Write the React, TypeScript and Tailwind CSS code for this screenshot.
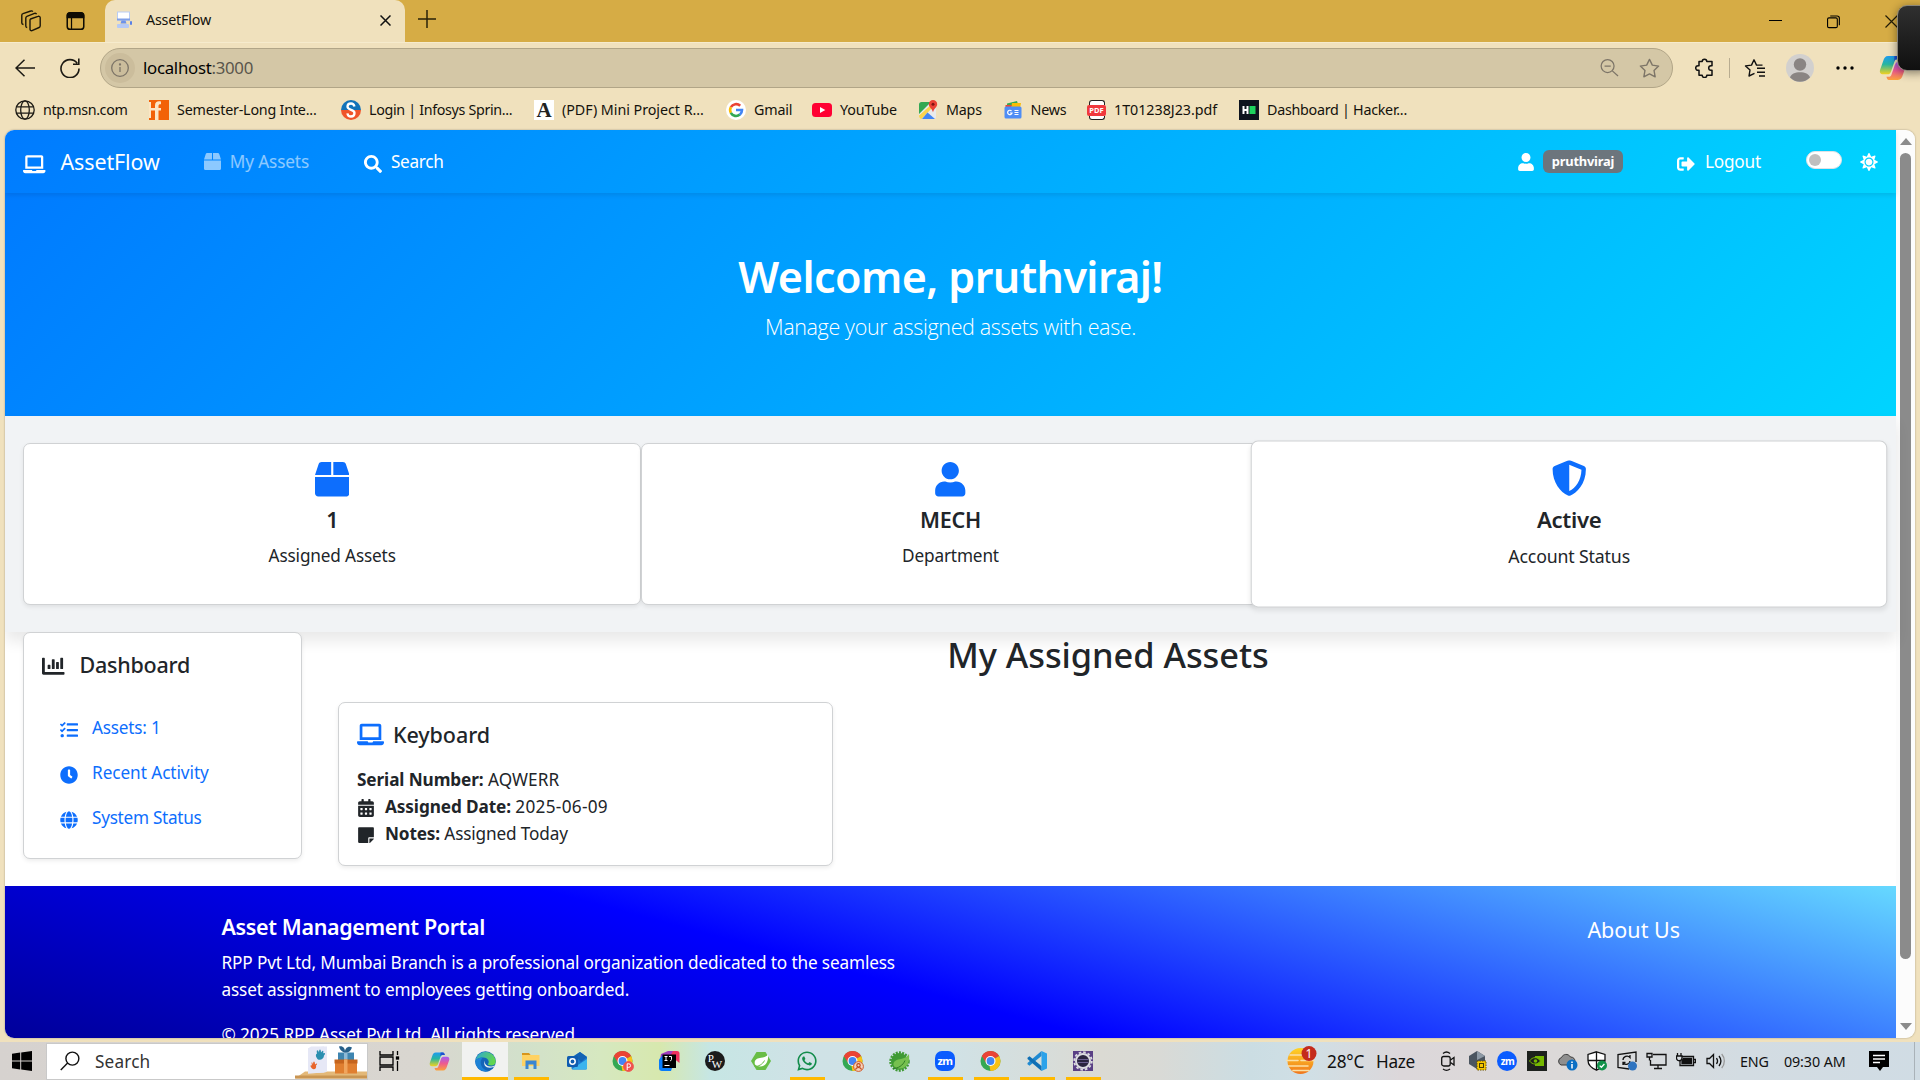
import type { ReactNode } from "react";
import {
  FaBox,
  FaCalendarAlt,
  FaChartBar,
  FaClock,
  FaGlobe,
  FaLaptop,
  FaSearch,
  FaShieldAlt,
  FaSignOutAlt,
  FaStickyNote,
  FaSun,
  FaTasks,
  FaUser,
  FaWhatsapp,
} from "react-icons/fa";

/* ---------- Browser chrome icons ---------- */

const WorkspacesIcon = () => (
  <svg width="22" height="22" viewBox="0 0 22 22" fill="none" stroke="#1b1608" strokeWidth="1.4" strokeLinejoin="round">
    <path d="M10.500 9 18 6.300a1.600 1.600 0 0 1 2.200 1.500v8c0 .8-.4 1.400-1.100 1.700L12 20.700c-1 .3-2-.4-2-1.400v-9c0-.6.1-1 .5-1.300Z" />
    <path d="M7.200 17.500c-.9-.1-1.400-.8-1.400-1.600V8c0-.8.400-1.400 1.100-1.700l7.600-2.900c.8-.3 1.700.1 2 .9" />
    <path d="M3.500 14.500c-.9-.1-1.700-.8-1.700-1.600V5.300c0-.8.500-1.500 1.200-1.700L10.800 1c.8-.3 1.600 0 2 .6" />
  </svg>
);

const TabActionsIcon = () => (
  <svg width="19" height="20" viewBox="0 0 20 20" fill="none" stroke="#0f0c04" strokeWidth="1.600">
    <rect x="1.300" y="1.300" width="17.400" height="17.400" rx="3" />
    <path d="M1.500 4.200A3 3 0 0 1 4.300 1.500h11.400a3 3 0 0 1 2.800 2.700v2H1.500Z" fill="#0f0c04" />
    <path d="M5.800 6v12.500" strokeWidth="1.300" />
  </svg>
);

const AssetFavicon = () => (
  <svg width="16" height="18" viewBox="0 0 16 18">
    <rect x="1.500" y="1" width="12" height="8" fill="#fff" stroke="#b9cdf5" />
    <path d="M1 7.500h13v2H1z" fill="#7f9fe8" />
    <path d="M5.500 9.500h4l1 3h-6z" fill="#6d92ea" />
    <rect x="1" y="13" width="12" height="4" rx="1" fill="#b5c9f6" />
    <rect x="14" y="10" width="2" height="4" rx="1" fill="#5a80e6" />
  </svg>
);

const StarPath = "M10 1.300l2.700 5.500 6 .9-4.400 4.200 1.100 6L10 15.100l-5.400 2.800 1.100-6L1.300 7.700l6-.9z";

const CopilotIcon = ({ size = 20 }: { size?: number }) => (
  <svg width={size} height={size} viewBox="0 0 20 20" className="shrink-0">
    <defs>
      <linearGradient id="cpa" x1="0" y1="0" x2="0" y2="1">
        <stop offset="0" stopColor="#1f9bf0" />
        <stop offset=".45" stopColor="#27b6a0" />
        <stop offset="1" stopColor="#f4d21f" />
      </linearGradient>
      <linearGradient id="cpb" x1="0" y1="0" x2="0" y2="1">
        <stop offset="0" stopColor="#a45cf2" />
        <stop offset=".5" stopColor="#ee5a8e" />
        <stop offset="1" stopColor="#fba13b" />
      </linearGradient>
    </defs>
    <path d="M13 1.500H6.500C4.500 1.500 3.600 3 3 5L.8 11.200C.2 13 1 14.500 3 14.500h3c1.500 0 2.300-1 2.800-2.600L11 5.500c.4-1.300 1-1.800 2.300-1.800h1.400C14.300 2.300 14 1.500 13 1.500Z" fill="url(#cpa)" />
    <path d="M11 1.500h2.500c1 .1 1.300.9 1.700 2.300h-2.300c-1.200 0-1.700.6-2.100 1.700z" fill="#1e4fd0" />
    <path d="M7 18.500h6.500c2 0 2.900-1.500 3.500-3.500l2.200-6.200c.6-1.800-.2-3.300-2.200-3.300h-3c-1.500 0-2.300 1-2.800 2.600L9 14.500c-.4 1.300-1 1.800-2.300 1.800H5.300c.4 1.400.7 2.200 1.700 2.200Z" fill="url(#cpb)" />
  </svg>
);

/* ---------- Bookmark icons ---------- */

const WireGlobe = () => (
  <svg width="20" height="20" viewBox="0 0 20 20" fill="none" stroke="#1c1a14" strokeWidth="1.300">
    <circle cx="10" cy="10" r="9.200" />
    <ellipse cx="10" cy="10" rx="4.300" ry="9.200" />
    <path d="M1.500 6.800h17M1.500 13.200h17" />
  </svg>
);

const FossIcon = () => (
  <svg width="20" height="20" viewBox="0 0 20 20">
    <rect width="20" height="20" fill="#f26207" />
    <path d="M0 2h2v16H0zM12 1.500c-3.500-.8-6 .4-6 4V8H2v2.500h4V20h3.500v-9.500H12V8H9.500V6c0-1.500.9-2 2.500-1.800z" fill="#fbe6c4" />
  </svg>
);

const SpringboardIcon = () => (
  <svg width="20" height="20" viewBox="0 0 20 20">
    <path d="M0 10a10 10 0 0 1 20 0z" fill="#1273b9" />
    <path d="M0 10a10 10 0 0 0 20 0z" fill="#f0542a" />
    <path d="M13.500 6.500C13 4.500 11.700 3.500 10 3.500c-2 0-3.500 1.200-3.500 3.100 0 4.200 7 2.400 7 6.300 0 2.200-1.500 3.600-3.500 3.600s-3.300-1.200-3.600-3.200" fill="none" stroke="#fff" strokeWidth="2.300" />
  </svg>
);

const AcademiaIcon = () => (
  <div className="flex size-5 items-center justify-center bg-white font-['Liberation_Serif',serif] text-[21px] leading-5 font-bold text-[#222]">A</div>
);

const GoogleIcon = () => (
  <svg width="20" height="20" viewBox="0 0 20 20">
    <circle cx="10" cy="10" r="10" fill="#fff" />
    <g fill="none" strokeWidth="2.600">
      <path d="M4.900 7.200A6 6 0 0 1 14.200 5.700" stroke="#ea4335" />
      <path d="M4.900 12.900a6 6 0 0 1 0-5.800" stroke="#fbbc05" />
      <path d="M13.900 14.600a6 6 0 0 1-9.100-1.800" stroke="#34a853" />
      <path d="M10 10h6c0 2-.7 3.500-2.200 4.700" stroke="#4285f4" />
    </g>
  </svg>
);

const YoutubeIcon = () => (
  <svg width="20" height="20" viewBox="0 0 20 20">
    <rect y="3" width="20" height="14" rx="3.500" fill="#ff0033" />
    <path d="M8 7l5.300 3L8 13z" fill="#fff" />
  </svg>
);

const MapsIcon = () => (
  <svg width="20" height="20" viewBox="0 0 20 20">
    <rect x="1" y="2" width="17" height="17" rx="2.500" fill="#e9eaec" />
    <path d="M3.500 2H13L1 14V4.500A2.500 2.500 0 0 1 3.500 2Z" fill="#34a853" />
    <path d="M1 15.500 14 4l2 2L3.500 19C2 19 1 17.500 1 15.500Z" fill="#fbd34d" />
    <path d="M9.500 12.500 17 19H4z" fill="#4285f4" />
    <path d="M15 0a4.200 4.200 0 0 1 4.200 4.200c0 3-3.300 4-4.200 8-.9-4-4.200-5-4.200-8A4.200 4.200 0 0 1 15 0Z" fill="#ea4335" />
    <circle cx="15" cy="4.300" r="1.500" fill="#811411" />
  </svg>
);

const NewsIcon = () => (
  <svg width="20" height="20" viewBox="0 0 20 20">
    <path d="M4 3.500 14 1l1.500 5H4z" fill="#34a853" />
    <path d="M9 3h9l-1 5H8z" fill="#fbbc05" />
    <path d="M2.500 5h6v3h-6z" fill="#ea4335" />
    <rect x="1.500" y="6.500" width="17" height="12" rx="1.500" fill="#4e8df5" />
    <path d="M8.500 11A2.200 2.200 0 1 0 9 13H7M11.500 10.500h4M11.500 12.500h4M11.500 14.500h4" fill="none" stroke="#fff" strokeWidth="1.200" />
  </svg>
);

const PdfIcon = () => (
  <div className="flex h-5 w-[19px] flex-col items-center justify-center">
    <div className="h-[5px] w-[16px] rounded-t-[3px] border border-b-0 border-[#222] bg-white" />
    <div className="w-[19px] rounded-[2px] bg-[#f0383d] text-center text-[7.500px] leading-[11px] font-bold text-white">PDF</div>
    <div className="h-[4px] w-[16px] rounded-b-[3px] border border-t-0 border-[#222] bg-white" />
  </div>
);

const HackerRankIcon = () => (
  <svg width="20" height="20" viewBox="0 0 20 20">
    <rect width="20" height="20" fill="#0e141e" />
    <path d="M3.500 6h2v3h2V6h2v8h-2v-3h-2v3h-2z" fill="#fff" />
    <rect x="10.500" y="6" width="6" height="8" fill="#1fd35e" />
  </svg>
);

const bookmarks: { label: string; icon: ReactNode; box: string; text: string }[] = [
  { label: "ntp.msn.com", icon: <WireGlobe />, box: "w-[134px]", text: "tracking-[-0.36px]" },
  { label: "Semester-Long Inte...", icon: <FossIcon />, box: "w-[192px]", text: "tracking-[-0.2px]" },
  { label: "Login | Infosys Sprin...", icon: <SpringboardIcon />, box: "w-[193px]", text: "tracking-[-0.33px]" },
  { label: "(PDF) Mini Project R...", icon: <AcademiaIcon />, box: "w-[192px]", text: "tracking-[-0.04px]" },
  { label: "Gmail", icon: <GoogleIcon />, box: "w-[86px]", text: "tracking-[-0.2px]" },
  { label: "YouTube", icon: <YoutubeIcon />, box: "w-[106px]", text: "tracking-[-0.14px]" },
  { label: "Maps", icon: <MapsIcon />, box: "w-[84.500px]", text: "tracking-[-0.2px]" },
  { label: "News", icon: <NewsIcon />, box: "w-[84.500px]", text: "tracking-[-0.2px]" },
  { label: "1T01238J23.pdf", icon: <PdfIcon />, box: "w-[152px]", text: "tracking-[-0.03px]" },
  { label: "Dashboard | Hacker...", icon: <HackerRankIcon />, box: "w-[180px]", text: "tracking-[-0.270px]" },
];

/* ---------- Browser chrome ---------- */

function TitleBar() {
  return (
    <div className="flex h-[42px] bg-[#d6ac45]">
      <div className="flex w-[105px] items-center pb-px pl-[20px]">
        <WorkspacesIcon />
        <div className="w-6" />
        <TabActionsIcon />
      </div>
      <div className="flex h-[42px] w-[300px] items-center rounded-t-[10px] bg-[#f0e1bd] pb-[2px] pl-[11px] text-[14.300px] tracking-[-0.2px]">
        <AssetFavicon />
        <span className="ml-[14px]">AssetFlow</span>
        <svg className="mr-[14px] ml-auto" width="11" height="11" viewBox="0 0 11 11" stroke="#111" strokeWidth="1.500">
          <path d="M.5.5l10 10M10.500.5l-10 10" />
        </svg>
      </div>
      <svg className="mt-[10px] ml-[13px]" width="18" height="18" viewBox="0 0 18 18" stroke="#2a2209" strokeWidth="1.500">
        <path d="M9 0v18M0 9h18" />
      </svg>
      <div className="ml-auto flex w-[151px] items-start gap-[45px] pt-[15px]">
        <svg width="13" height="13" viewBox="0 0 13 13" stroke="#000">
          <path d="M0 5.500h13" />
        </svg>
        <svg width="13" height="14" viewBox="0 0 14 14" fill="none" stroke="#000" strokeWidth="1.200">
          <rect x=".6" y="2.600" width="10.500" height="10.500" rx="1.500" />
          <path d="M3.500.6h7.400a2.400 2.400 0 0 1 2.400 2.400v7.500" />
        </svg>
        <svg width="13" height="13" viewBox="0 0 13 13" stroke="#221b06" strokeWidth="1.200">
          <path d="M.5.500l12 12M12.500.500l-12 12" />
        </svg>
      </div>
    </div>
  );
}

function AddressRow() {
  return (
    <div className="flex h-[51px] items-center border-t border-[#f6ebcd] pl-[15px]">
      <svg width="20" height="18" viewBox="0 0 20 18" fill="none" stroke="#1c1a14" strokeWidth="1.500">
        <path d="M20 9H1M9.500.7 1 9l8.500 8.300" />
      </svg>
      <svg className="ml-[25px]" width="20" height="20" viewBox="0 0 20 20" fill="none" stroke="#1c1a14" strokeWidth="1.600">
        <path d="M17.200 5.200A9 9 0 1 0 19 10.500M18.800.5v5.800H13" />
      </svg>
      <div className="ml-[20px] flex h-10 w-[1573px] items-center rounded-full border border-[#b1a587] bg-[#d4c7a6] pr-[12px] pl-[4px] text-[16.800px]">
        <div className="flex size-[30px] items-center justify-center rounded-full bg-[#cbbd9c]">
          <svg width="18" height="18" viewBox="0 0 18 18" fill="none" stroke="#7c7467" strokeWidth="1.300">
            <circle cx="9" cy="9" r="8.300" />
            <path d="M9 8v5" />
            <circle cx="9" cy="5.500" r=".5" />
          </svg>
        </div>
        <span className="ml-[8px] tracking-[-0.270px] text-black">
          localhost<span className="text-[#5a564c]">:3000</span>
        </span>
        <svg className="ml-auto" width="19" height="20" viewBox="0 0 20 20" fill="none" stroke="#7c7467" strokeWidth="1.300">
          <circle cx="8" cy="8" r="6.800" />
          <path d="M13 13l6 5.500M4.800 8h6.500" />
        </svg>
        <svg className="ml-[20px]" width="21" height="21" viewBox="0 0 20 20" fill="none" stroke="#7c7467" strokeWidth="1.300" strokeLinejoin="round">
          <path d={StarPath} />
        </svg>
      </div>
      <svg className="ml-[22px]" width="19" height="20" viewBox="0 0 19 20" fill="none" stroke="#111" strokeWidth="1.500" strokeLinejoin="round">
        <path d="M4 3.500h3.200a2.300 2.300 0 0 1 4.600 0H17v4.200h-1a2.300 2.300 0 0 0 0 4.600h1v5h-5.200a2.300 2.300 0 0 1-4.600 0H4v-5H3a2.300 2.300 0 0 1 0-4.600h1z" />
      </svg>
      <div className="ml-[15px] h-5 w-px bg-[#b8ac90]" />
      <svg className="ml-[14px]" width="22" height="20" viewBox="0 0 22 20" fill="none" stroke="#111" strokeWidth="1.400" strokeLinejoin="round">
        <path d="M10.500 15.400 5 18l1-6L1.500 7.900l6-.8L10 1.800l2.500 5.300h6M13 10.200h8M13 14.200h8M15 18h6" />
      </svg>
      <svg className="ml-[20px]" width="28" height="28" viewBox="0 0 28 28">
        <circle cx="14" cy="14" r="14" fill="#d2d0ce" />
        <circle cx="14" cy="10.500" r="6.200" fill="#8a8583" />
        <path d="M4 23.500C5 20 9 18.300 14 18.300s9 1.700 10 5.200a14 14 0 0 1-20 0Z" fill="#8a8583" />
      </svg>
      <svg className="ml-[22px]" width="18" height="4" viewBox="0 0 18 4">
        <circle cx="2" cy="2" r="1.700" />
        <circle cx="9" cy="2" r="1.700" />
        <circle cx="16" cy="2" r="1.700" />
      </svg>
      <div className="ml-[25px]">
        <CopilotIcon size={28} />
      </div>
    </div>
  );
}

function BookmarksBar() {
  return (
    <div className="flex h-[37px] items-center pl-[15px] text-[14.300px] leading-5 whitespace-nowrap">
      {bookmarks.map((b) => (
        <div key={b.label} className={`${b.box} flex shrink-0 items-center gap-[8px] pb-[3px]`}>
          {b.icon}
          <span className={b.text}>{b.label}</span>
        </div>
      ))}
    </div>
  );
}

/* ---------- Page ---------- */

function Navbar() {
  return (
    <nav className="relative flex h-[63px] shrink-0 items-center bg-[linear-gradient(135deg,#007bff,#00d4ff)] pr-[18px] pl-[18px] text-[17.200px] text-white shadow-[0_2px_5px_rgba(0,0,0,0.1)]">
      <FaLaptop className="mt-[5px] size-[22.500px]" />
      <span className="mt-[2px] ml-[15px] text-[21.500px] tracking-[-0.130px]">AssetFlow</span>
      <span className="ml-[44px] flex items-center text-white/55">
        <FaBox className="size-[17px]" />
        <span className="ml-[9px] tracking-[-0.130px]">My Assets</span>
      </span>
      <FaSearch className="mt-[4px] ml-[55px] size-[18px]" />
      <span className="ml-[9px] tracking-[-0.300px]">Search</span>
      <FaUser className="ml-auto size-[18px]" />
      <span className="ml-[8px] flex h-[23px] w-[80px] items-center justify-center rounded-[6px] bg-[#6c757d] pt-px text-[12.900px] font-bold tracking-[-0.220px]">pruthviraj</span>
      <FaSignOutAlt className="mt-[5px] ml-[54px] size-[18px]" />
      <span className="ml-[10px] tracking-[-0.2px]">Logout</span>
      <span className="mb-[4px] ml-[45px] flex h-[18px] w-[36px] items-center rounded-full border border-[#dee2e6] bg-white pl-[2px]">
        <span className="size-[12px] rounded-full bg-[#bfbfbf]" />
      </span>
      <FaSun className="ml-[18px] size-[18px]" />
    </nav>
  );
}

function StatCard({ icon, value, label, raised = false }: { icon: ReactNode; value: string; label: string; raised?: boolean }) {
  return (
    <div
      className={`flex h-[162px] flex-1 flex-col items-center rounded-[7px] border border-[#d0d2d4] bg-white pt-[18px] ${raised ? "relative scale-[1.03] shadow-[0_3px_5px_rgba(0,0,0,0.08)]" : "shadow-[0_2px_4px_rgba(0,0,0,0.075)]"}`}
    >
      <div className="text-[34.500px] text-[#0d6efd]">{icon}</div>
      <div className="mt-[9px] text-[21.500px] leading-[27px] font-semibold tracking-[-0.300px]">{value}</div>
      <div className="mt-[9px] leading-[27px]">{label}</div>
    </div>
  );
}

function SideLink({ icon, children }: { icon: ReactNode; children: ReactNode }) {
  return (
    <div className="flex h-[45px] items-start gap-[14px] text-[#0d6efd]">
      <span className="mt-[7px] text-[18px]">{icon}</span>
      <span className="leading-[27px]">{children}</span>
    </div>
  );
}

function Page() {
  return (
    <div className="flex min-w-0 flex-1 flex-col bg-white text-[17.200px] tracking-[-0.150px] text-[#212529]">
      <Navbar />
      <header className="flex h-[223px] shrink-0 flex-col items-center bg-[linear-gradient(135deg,#007bff,#00d4ff)] pt-[57px] text-white">
        <h1 className="text-[43px] leading-[54px] font-semibold tracking-[-0.570px]">Welcome, pruthviraj!</h1>
        <p className="mt-[6px] font-['Open_Sans',sans-serif] text-[21.500px] leading-[34px] font-[350] tracking-[-0.340px]">Manage your assigned assets with ease.</p>
      </header>
      <section className="relative flex h-[216px] shrink-0 bg-[#f1f3f5] px-[18px] pt-[27px] shadow-[0_9px_14px_rgba(0,0,0,0.09)]">
        <StatCard icon={<FaBox />} value="1" label="Assigned Assets" />
        <StatCard icon={<FaUser />} value="MECH" label="Department" />
        <StatCard icon={<FaShieldAlt />} value="Active" label="Account Status" raised />
      </section>
      <div className="relative flex h-[254px] shrink-0">
        <aside className="ml-[18px] h-[227px] w-[279px] rounded-[7px] border border-[#d0d2d4] bg-white pt-[18px] pl-[18px] shadow-[0_2px_4px_rgba(0,0,0,0.075)]">
          <div className="flex items-center">
            <FaChartBar className="mt-[4px] size-[22.500px]" />
            <h5 className="ml-[15px] text-[21.500px] leading-[27px] font-medium tracking-[-0.230px]">Dashboard</h5>
          </div>
          <div className="mt-[36px] ml-[18px]">
            <SideLink icon={<FaTasks />}>
              <span className="tracking-[-0.220px]">Assets: 1</span>
            </SideLink>
            <SideLink icon={<FaClock />}>
              <span className="tracking-[-0.060px]">Recent Activity</span>
            </SideLink>
            <SideLink icon={<FaGlobe />}>
              <span className="tracking-[-0.280px]">System Status</span>
            </SideLink>
          </div>
        </aside>
        <main className="ml-[18px] flex-1">
          <h2 className="pt-px text-center text-[34.400px] leading-[43px] font-medium tracking-[-0.050px]">My Assigned Assets</h2>
          <article className="mt-[26px] ml-[18px] h-[164px] w-[495px] rounded-[7px] border border-[#d0d2d4] bg-white pt-[18px] pl-[18px] shadow-[0_2px_4px_rgba(0,0,0,0.075)]">
            <div className="flex h-[27px] items-center">
              <FaLaptop className="size-[27px] text-[#0d6efd]" />
              <h5 className="mt-[2px] ml-[9px] text-[21.500px] font-medium tracking-[-0.080px]">Keyboard</h5>
            </div>
            <p className="mt-[18px] leading-[27px]">
              <b className="tracking-[-0.100px]">Serial Number:</b> <span className="tracking-[0.100px]">AQWERR</span>
            </p>
            <p className="flex leading-[27px]">
              <FaCalendarAlt className="mt-[6px] mr-[10px] size-[18px]" />
              <span>
                <b className="tracking-[-0.100px]">Assigned Date:</b> <span className="tracking-[0.300px]">2025-06-09</span>
              </span>
            </p>
            <p className="flex leading-[27px]">
              <FaStickyNote className="mt-[6px] mr-[10px] size-[18px]" />
              <span>
                <b>Notes:</b> Assigned Today
              </span>
            </p>
          </article>
        </main>
      </div>
      <footer className="flex h-[226px] shrink-0 justify-between bg-[linear-gradient(15deg,#000080,#0000ff_50%,#66d9ff)] pr-[216px] pl-[216.500px] text-white">
        <div className="pt-[27px]">
          <h5 className="text-[21.500px] leading-[27px] font-semibold tracking-[-0.370px]">Asset Management Portal</h5>
          <p className="mt-[9px] leading-[27px] tracking-[-0.145px]">
            RPP Pvt Ltd, Mumbai Branch is a professional organization dedicated to the seamless
            <br />
            asset assignment to employees getting onboarded.
          </p>
          <p className="mt-[18px] leading-[27px] tracking-[-0.090px]">© 2025 RPP Asset Pvt Ltd. All rights reserved.</p>
        </div>
        <div className="pt-[30px] text-[21.500px] leading-[27px] tracking-[0px]">About Us</div>
      </footer>
    </div>
  );
}

function Scrollbar() {
  return (
    <div className="flex w-[19px] flex-col items-center bg-[#fcfcfc] pt-[8px] pb-[8px]">
      <svg width="12" height="7" viewBox="0 0 12 7" fill="#8b8b8b">
        <path d="M6 0l6 7H0z" />
      </svg>
      <div className="mt-[8px] h-[806px] w-[11px] rounded-full bg-[#8b8b8b]" />
      <svg className="mt-auto" width="12" height="7" viewBox="0 0 12 7" fill="#8b8b8b">
        <path d="M6 7l6-7H0z" />
      </svg>
    </div>
  );
}

/* ---------- Taskbar ---------- */

const ChromeIcon = ({ badge }: { badge?: "p" | "user" }) => (
  <svg width="22" height="22" viewBox="0 0 22 22">
    <circle cx="10.500" cy="11" r="10" fill="#34a853" />
    <path d="M10.500 11 1.840 6A10 10 0 0 1 19.160 6z" fill="#ea4335" />
    <path d="M10.500 11 19.160 6A10 10 0 0 1 10.500 21z" fill="#fbc116" />
    <path d="M1.840 6h8.660v5L6.500 13.500z" fill="#ea4335" />
    <path d="M14.800 13.300 10.500 21l-1-5z" fill="#fbc116" />
    <circle cx="10.500" cy="11" r="5" fill="#fff" />
    <circle cx="10.500" cy="11" r="3.900" fill="#4285f4" />
    {badge && <circle cx="16.500" cy="16.500" r="4.900" fill={badge === "p" ? "#ef5350" : "#f4d3bd"} stroke={badge === "p" ? "#ef5350" : "#d0592b"} />}
    {badge === "p" && <path d="M15.200 20v-6.200h1.600a1.700 1.700 0 0 1 0 3.500h-1.600" fill="none" stroke="#fff" />}
    {badge === "user" && (
      <g fill="none" stroke="#c0491c" strokeWidth="1.200">
        <circle cx="16.500" cy="15.300" r="1.700" />
        <path d="M13.500 19.500c.5-1.500 1.500-2 3-2s2.500.5 3 2" />
      </g>
    )}
  </svg>
);

const EdgeIcon = () => (
  <svg width="21" height="21" viewBox="0 0 21 21">
    <defs>
      <linearGradient id="eg" x1="0" y1="0" x2="1" y2=".4">
        <stop offset="0" stopColor="#2aa5dc" />
        <stop offset="1" stopColor="#62d64e" />
      </linearGradient>
    </defs>
    <circle cx="10.500" cy="10.500" r="10.300" fill="#1464b8" />
    <path d="M.3 10A10.300 10.300 0 0 1 20.800 10c0 3-2 4.500-4.500 4.500-2.300 0-3.500-.8-3.300-1.500.2-.5.900-1 .7-2.500C13.300 8 11 6.500 8.200 6.500 4.500 6.500 1.200 8 .3 10Z" fill="url(#eg)" />
    <path d="M.3 10C1.200 8 4.500 6.500 8.200 6.500c-1.500.8-2.700 3-2.500 5.500.3 4.500 4.200 7.700 8.300 7.900A10.300 10.300 0 0 1 .3 10Z" fill="#1d82d6" />
    <path d="M10.200 9.300c-1.500 3 1.300 6.200 5 6.200 2.200 0 3.300-.4 4.800-1.200L18.500 16c-6 2.300-11.500-1-8.300-6.700Z" fill="#eef2f4" />
  </svg>
);

const ExplorerIcon = () => (
  <svg width="20" height="18" viewBox="0 0 20 18">
    <path d="M1 1h7l2 2.500H1z" fill="#d8951d" />
    <path d="M1 3h17.500v11H1z" fill="#ffd262" />
    <path d="M4.500 8.500h11V17h-3v-4.500h-5V17h-3z" fill="#3a86d1" />
  </svg>
);

const OutlookIcon = () => (
  <svg width="20" height="20" viewBox="0 0 20 20">
    <path d="M5 6 13 1l7 5v11a1.500 1.500 0 0 1-1.500 1.500H6A1.500 1.500 0 0 1 4.500 17z" fill="#1b78cf" />
    <path d="M8 4.500 13 1l7 5-6 5z" fill="#1363b4" />
    <path d="M5 18 20 8v9a1.500 1.500 0 0 1-1.500 1.500H6z" fill="#3bb4ee" />
    <rect x="0" y="5" width="11" height="11" rx="1.500" fill="#0f5cb0" />
    <circle cx="5.500" cy="10.500" r="2.700" fill="none" stroke="#fff" strokeWidth="1.500" />
  </svg>
);

const IntellijIcon = () => (
  <svg width="21" height="20" viewBox="0 0 21 20">
    <path d="M9 0h9a2.500 2.500 0 0 1 2.500 2.500V12L9 3z" fill="#f0315e" />
    <path d="M2 3 9 0h5L8 10H1z" fill="#a13cc0" />
    <path d="M0 8.500 4 4l9 13-1 3H3a3 3 0 0 1-3-3z" fill="#087cfa" />
    <rect x="3.500" y="3.500" width="13.500" height="13.500" />
    <path d="M5.500 5.500h3M7 5.500v4M5.500 9.500h3M10 5.500h2.500v3c0 .8-.5 1.200-1.500 1.200M5.500 14.500h5" stroke="#fff" fill="none" />
  </svg>
);

const PwIcon = () => (
  <div className="flex size-5 items-center justify-center rounded-full bg-[#1b1b1b] font-['Liberation_Serif',serif] text-[11px] leading-5 tracking-[-2px] text-white">
    <span className="-mt-[6px]">P</span>
    <span className="mt-[6px] pr-[2px]">W</span>
  </div>
);

const SpringIcon = () => (
  <svg width="20" height="20" viewBox="0 0 20 20">
    <path d="M5.500 1h9L20 10l-5.500 9h-9L0 10z" fill="#68bd45" />
    <path d="M17 3.500c.7 6-1.500 12-8 12-2 0-4-.8-5-2C2.500 9 6.500 7 10 6.700 13.500 6.500 15.700 5.500 17 3.500Z" fill="#fff" />
    <path d="M3.500 15.500c4 0 8-2 10-6" stroke="#68bd45" fill="none" />
  </svg>
);

const SpringToolIcon = () => (
  <svg width="21" height="21" viewBox="0 0 21 21">
    <circle cx="10.500" cy="10.500" r="8.500" fill="#3f9a34" />
    <circle cx="10.500" cy="10.500" r="9" fill="none" stroke="#3f9a34" strokeWidth="2.500" strokeDasharray="2 1.200" />
    <path d="M20 3c1 8-2 14.500-9 14.500-3 0-6-1.500-6.500-3.500C4 10 8 8.500 12 8c3.500-.5 6.500-2.500 8-5Z" fill="#76c04f" />
    <path d="M4 17.500c5 0 10-3 12-8" stroke="#2f7d27" fill="none" />
  </svg>
);

const ZoomIcon = () => (
  <div className="flex size-5 items-center justify-center rounded-[7px] bg-[#0b5cff] pb-[2px] text-[11px] leading-none font-bold tracking-[-0.600px] text-white">zm</div>
);

const VscodeIcon = () => (
  <svg width="20" height="20" viewBox="0 0 20 20">
    <path d="M14.500 0 20 2.500v15L14.500 20z" fill="#2ba2ea" />
    <path d="M14.500 0v5L2.500 14.800.5 13.200V12z" fill="#1f8ad2" />
    <path d="M14.500 20v-5L2.500 5.200.5 6.800V8z" fill="#0f6fb5" />
  </svg>
);

const EclipseIcon = () => (
  <svg width="20" height="20" viewBox="0 0 20 20">
    <rect width="20" height="20" fill="#5a4085" />
    <circle cx="10" cy="10" r="7" fill="#2b2540" stroke="#dcdce0" strokeWidth="2" />
    <circle cx="10" cy="10" r="8.800" fill="none" stroke="#dcdce0" strokeWidth="1.800" strokeDasharray="2.600 2" />
    <path d="M4.500 8.500h11M4.500 11.500h11" stroke="#6b5f90" />
  </svg>
);

const TaskViewIcon = () => (
  <svg width="21" height="20" viewBox="0 0 21 20" fill="none" stroke="#000" strokeWidth="1.300">
    <path d="M1 0v4h13V0M1 20v-4h13v4M1 6h13v8H1zM18.500 0v4M18.500 10v10" />
    <rect x="17.500" y="6" width="2" height="2" fill="#000" />
  </svg>
);

const apps: { id: string; icon: ReactNode; open?: boolean; active?: boolean }[] = [
  { id: "copilot", icon: <CopilotIcon size={21} /> },
  { id: "edge", icon: <EdgeIcon />, open: true, active: true },
  { id: "explorer", icon: <ExplorerIcon />, open: true },
  { id: "outlook", icon: <OutlookIcon /> },
  { id: "chrome-p", icon: <ChromeIcon badge="p" /> },
  { id: "intellij", icon: <IntellijIcon /> },
  { id: "pw", icon: <PwIcon /> },
  { id: "spring", icon: <SpringIcon /> },
  { id: "whatsapp", icon: <FaWhatsapp className="size-[22px] text-[#128c4b]" />, open: true },
  { id: "chrome-user", icon: <ChromeIcon badge="user" /> },
  { id: "sts", icon: <SpringToolIcon /> },
  { id: "zoom", icon: <ZoomIcon />, open: true },
  { id: "chrome", icon: <ChromeIcon />, open: true },
  { id: "vscode", icon: <VscodeIcon />, open: true },
  { id: "eclipse", icon: <EclipseIcon />, open: true },
];

const trayIcons: ReactNode[] = [
  <svg key="meet" width="14" height="20" viewBox="0 0 14 20" fill="none" stroke="#111" strokeWidth="1.300">
    <rect x=".7" y="5.500" width="8.500" height="9.500" rx="2" />
    <path d="M9.500 9l3.500-2.500v7.500L9.500 11.500M2 2.500C4 .8 7 .8 9 2.500M2 18c2 1.500 5 1.500 7 0" />
  </svg>,
  <svg key="chip" width="20" height="22" viewBox="0 0 20 22">
    <path d="M9 1l8 5v8l-8 5-8-5V6z" fill="#4b5560" />
    <path d="M9 1l8 5-8 4z" fill="#8d99a5" />
    <rect x="9" y="11" width="9" height="9" fill="#f6c800" stroke="#6b5500" strokeDasharray="1.500 1" />
    <rect x="11.500" y="13.500" width="4" height="4" fill="none" stroke="#4b3d00" />
  </svg>,
  <div key="zm" className="flex size-5 items-center justify-center rounded-full bg-[#0b5cff] pb-px text-[10px] leading-none font-bold tracking-[-0.600px] text-white">zm</div>,
  <svg key="nv" width="20" height="20" viewBox="0 0 20 20">
    <rect width="20" height="20" fill="#1d211d" />
    <path d="M8 5h9v10H8z" fill="#76b900" />
    <path d="M2.500 10c3-4.500 8-4.500 11 0-3 4-8 4-11 0Z" fill="#1d211d" stroke="#76b900" />
    <circle cx="8.500" cy="10" r="1.800" fill="#76b900" />
  </svg>,
  <svg key="cloud" width="21" height="20" viewBox="0 0 21 20">
    <path d="M4 14a4 4 0 0 1 .5-7.500C6 3 11 2 13.500 6c3 0 4.500 2 4.500 4.500L10 14z" fill="#8f8f8f" stroke="#3a3a3a" />
    <circle cx="15" cy="14" r="5.500" fill="#0b6fc4" />
    <path d="M15 13v4.500M15 10.500v1.400" stroke="#fff" strokeWidth="1.500" />
  </svg>,
  <svg key="shield" width="20" height="20" viewBox="0 0 20 20">
    <path d="M9.500.8 18 3.500v6c0 4-3.500 7.500-8.500 9.700C4.500 17 1 13.500 1 9.500v-6z" fill="#fff" stroke="#111" strokeWidth="1.300" />
    <path d="M9.500 1v18M1 9.500h17" stroke="#111" strokeWidth="1.300" />
    <circle cx="15" cy="14.500" r="5" fill="#11924a" />
    <path d="M12.700 14.600l1.700 1.700 3-3.300" stroke="#fff" fill="none" strokeWidth="1.300" />
  </svg>,
  <svg key="sync" width="20" height="20" viewBox="0 0 20 20" fill="none" stroke="#111" strokeWidth="1.300">
    <path d="M12 18 1 16.500V3.500L19 1v10" />
    <path d="M6 9a4 4 0 0 1 7-2.500V4M6 14v-2.500h2.500M13 10a4 4 0 0 1-6.500 2.500" />
    <circle cx="15.500" cy="15" r="4.500" fill="#2f74c0" stroke="none" />
  </svg>,
  <svg key="display" width="21" height="20" viewBox="0 0 21 20" fill="none" stroke="#111" strokeWidth="1.300">
    <path d="M7 3.500h13V14H4.500V9M12 14v3.500M8 17.500h8M1 2.500h5v3.500H1zM3.500 6v3.500" />
  </svg>,
  <svg key="battery" width="20" height="16" viewBox="0 0 20 16" fill="none" stroke="#111" strokeWidth="1.300">
    <path d="M6 3.500h11.500v9H4V8M17.500 6.500h2v3h-2" />
    <path d="M7.500 5.500h8v5h-9.500V8z" fill="#111" />
    <path d="M1.500 0v3M5 0v3M.5 3h5.500v2a2.500 2.500 0 0 1-5.500 0z" fill="#d8dde2" />
  </svg>,
  <svg key="volume" width="20" height="18" viewBox="0 0 20 18" fill="none" stroke="#111" strokeWidth="1.300">
    <path d="M1 6.500h2.500l4-4v13l-4-4H1zM10.500 6c1.200 1.700 1.200 4.300 0 6M13 4c2.300 3 2.300 7 0 10" />
    <path d="M15.700 2c3.500 4 3.500 10 0 14" stroke="#999" />
  </svg>,
];

function HazeIcon() {
  return (
    <svg width="32" height="32" viewBox="0 0 32 32">
      <defs>
        <linearGradient id="hz" x1="0" y1="0" x2="0" y2="1">
          <stop offset="0" stopColor="#ffd426" />
          <stop offset="1" stopColor="#f0761c" />
        </linearGradient>
      </defs>
      <circle cx="14.500" cy="16" r="13" fill="url(#hz)" />
      <path d="M4 10h14M0 15.500h12M15 15.500h13M2 21h20M7 25.500h16" stroke="#fbe0a6" strokeWidth="1.600" strokeLinecap="round" />
      <circle cx="23" cy="8.500" r="7.500" fill="#c42b1c" />
      <text x="23" y="12.800" fontSize="12" fill="#fff" textAnchor="middle">1</text>
    </svg>
  );
}

function Giftbox() {
  return (
    <svg width="72" height="35" viewBox="0 0 72 34">
      <path d="M10 27h62v7H0z" fill="#e3b878" />
      <path d="M0 31h72v3H0z" fill="#c99552" />
      <path d="M13 4l16-2v26l-16 1z" fill="#dfe2f3" />
      <path d="M13 4l3-2h16v25l-2 1-17 1z" fill="#e6e8f6" />
      <path d="M23 15c-2-2-3-5-1-6-1-4 1-4 2-1 0-4 2-4 2 0 2-3 3-2 2 1 2-1 3 0 1 2 0 3-3 5-6 4Z" fill="#2a8fb0" />
      <path d="M17 24c-2-2-2-4 0-3-1-4 0-4 1-1 0-4 2-4 2 0 2-2 3-1 1 1 1 3-2 5-4 3Z" fill="#e8652b" />
      <path d="M43 8h16v8H43z" fill="#3f85b0" />
      <path d="M49 8h3.500v8H49z" fill="#8db9d6" />
      <path d="M44 2c4-1 6 2 6 5 0-3 3-6 7-4-1 3-3 5-6 5s-6-2-7-6Z" fill="#27608a" />
      <path d="M40 16h22v13H40z" fill="#e07f30" />
      <path d="M39.500 15h23v4h-23z" fill="#c5641d" />
      <path d="M49 15h3.500v14H49z" fill="#f0a55c" />
    </svg>
  );
}

function Taskbar() {
  return (
    <div className="flex h-[38px] shrink-0 items-center bg-[linear-gradient(90deg,#d6d2cf_0,#d9d6d0_420px,#d2e0cb_520px,#d6e8c0_600px,#d7e8ae_660px,#c6e6e4_710px,#cfe2e6_800px,#d0e2e6_950px,#dbdad3_1100px,#d9dad6_1160px,#cbdde3_1250px,#d0dfe5_1310px,#dcd7da_1400px,#dcd9d8_1560px,#d3dce2_1740px,#d0dce4_1920px)] text-[17.200px] text-[#111]">
      <svg className="ml-[12px]" width="20" height="20" viewBox="0 0 20 20">
        <path d="M0 2.800 8.200 1.600v7.900H0zM9.200 1.400 20 0v9.500H9.200zM0 10.500h8.200v7.900L0 17.200zM9.200 10.500H20V20L9.200 18.600z" />
      </svg>
      <div className="ml-[14px] flex h-[37px] w-[322px] items-center border border-[#c9c9c9] bg-white">
        <svg className="ml-[13px]" width="20" height="20" viewBox="0 0 21 21" fill="none" stroke="#111" strokeWidth="1.500">
          <circle cx="13" cy="8" r="6.800" />
          <path d="M8 12.700.8 20" />
        </svg>
        <span className="mt-px ml-[15px] tracking-[0.150px] text-[#333]">Search</span>
        <div className="ml-auto">
          <Giftbox />
        </div>
      </div>
      <div className="ml-[11px]">
        <TaskViewIcon />
      </div>
      <div className="ml-[16px] flex self-stretch">
        {apps.map((a) => (
          <div key={a.id} className={`flex w-[46px] flex-col items-center ${a.active ? "bg-[#f1f2f0]" : ""}`}>
            <div className="flex h-[35px] items-center pt-[3px]">{a.icon}</div>
            {a.open && <div className={`h-[3px] bg-[#ffb900] ${a.active ? "w-[46px]" : "w-[35px]"}`} />}
          </div>
        ))}
      </div>
      <div className="ml-auto flex w-[634px] items-center">
        <HazeIcon />
        <span className="mt-px ml-[9px] w-[49px] tracking-[-0.150px]">28°C</span>
        <span className="mt-px w-[57px] tracking-[-0.350px]">Haze</span>
        <div className="flex">
          {trayIcons.map((icon, i) => (
            <div key={i} className="flex w-[29.800px] items-center justify-center">
              {icon}
            </div>
          ))}
        </div>
        <div className="ml-[9px] mt-px flex whitespace-nowrap text-[14.300px]">
          <span className="w-[44px] tracking-[-0.150px]">ENG</span>
          <span className="w-[85px] tracking-[-0.100px]">09:30 AM</span>
        </div>
        <svg width="20" height="20" viewBox="0 0 20 20">
          <path d="M0 0h20v16h-6l-3 4-3-4H0z" />
          <path d="M4 4.500h12M4 8h12M4 11.500h7" stroke="#fff" strokeWidth="1.300" />
        </svg>
        <div className="ml-auto mr-[5px] h-[38px] w-px bg-[#a9b2b8]" />
      </div>
    </div>
  );
}

export default function App() {
  return (
    <div className="relative flex h-[1080px] w-[1920px] flex-col overflow-hidden bg-[#f0e1bd] font-['Noto_Sans',sans-serif] text-[#14120c]">
      <TitleBar />
      <AddressRow />
      <BookmarksBar />
      <div className="mr-[5px] ml-[5px] flex h-[908px] shrink-0 overflow-hidden rounded-[9px] shadow-[0_0_2px_rgba(0,0,0,0.350)]">
        <Page />
        <Scrollbar />
      </div>
      <div className="h-[4px] shrink-0" />
      <Taskbar />
      <div className="absolute top-[5px] -right-[10px] h-[66px] w-[33px] rounded-[10px] border border-[#8a8578] bg-linear-to-b from-[#303030] to-[#101010] shadow-[0_2px_10px_rgba(0,0,0,0.450)]" />
    </div>
  );
}
